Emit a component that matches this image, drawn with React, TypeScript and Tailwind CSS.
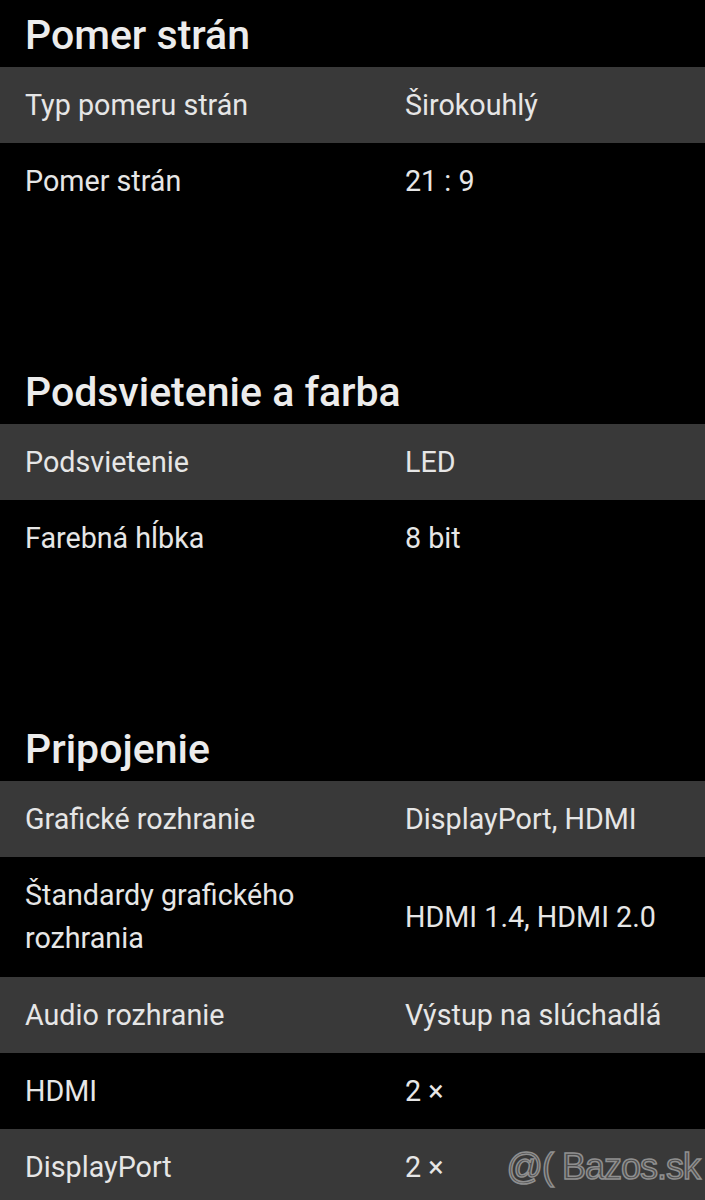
import React from "react";

type Row = { label: React.ReactNode; value: string; tall?: boolean };
type Section = { title: string; rows: Row[] };

const sections: Section[] = [
  {
    title: "Pomer strán",
    rows: [
      { label: "Typ pomeru strán", value: "Širokouhlý" },
      { label: "Pomer strán", value: "21 : 9" },
    ],
  },
  {
    title: "Podsvietenie a farba",
    rows: [
      { label: "Podsvietenie", value: "LED" },
      { label: "Farebná hĺbka", value: "8 bit" },
    ],
  },
  {
    title: "Pripojenie",
    rows: [
      { label: "Grafické rozhranie", value: "DisplayPort, HDMI" },
      { label: "Štandardy grafického rozhrania", value: "HDMI 1.4, HDMI 2.0", tall: true },
      { label: "Audio rozhranie", value: "Výstup na slúchadlá" },
      { label: "HDMI", value: "2 ×" },
      { label: "DisplayPort", value: "2 ×" },
    ],
  },
];

export default function App() {
  return (
    <div className="relative min-h-[1200px] bg-black text-[#e6e6e6] font-['Roboto',sans-serif] overflow-hidden">
      <div className="flex flex-col gap-[138px]">
        {sections.map((s) => (
          <section key={s.title}>
            <h2 className="h-[67px] flex items-end pb-[11px] px-[25px] text-[41px] font-medium text-[#ececec] leading-none">
              {s.title}
            </h2>
            <div>
              {s.rows.map((r, i) => (
                <div
                  key={i}
                  className={`grid grid-cols-[380px_1fr] items-center px-[25px] text-[28.7px] ${
                    r.tall ? "min-h-[120px]" : "min-h-[76px]"
                  } ${i % 2 === 0 ? "bg-[#393939]" : "bg-black"}`}
                >
                  <div className={r.tall ? "leading-[43px] pr-[50px]" : "leading-none"}>{r.label}</div>
                  <div className="leading-none">{r.value}</div>
                </div>
              ))}
            </div>
          </section>
        ))}
      </div>
      <div className="absolute right-[5px] top-[1149px] font-['Liberation_Sans',sans-serif] text-[36px] leading-none tracking-[-1px] text-[#4d4d4d] [-webkit-text-stroke:1.5px_#8f8f8f]">
        @( Bazos.sk
      </div>
    </div>
  );
}
